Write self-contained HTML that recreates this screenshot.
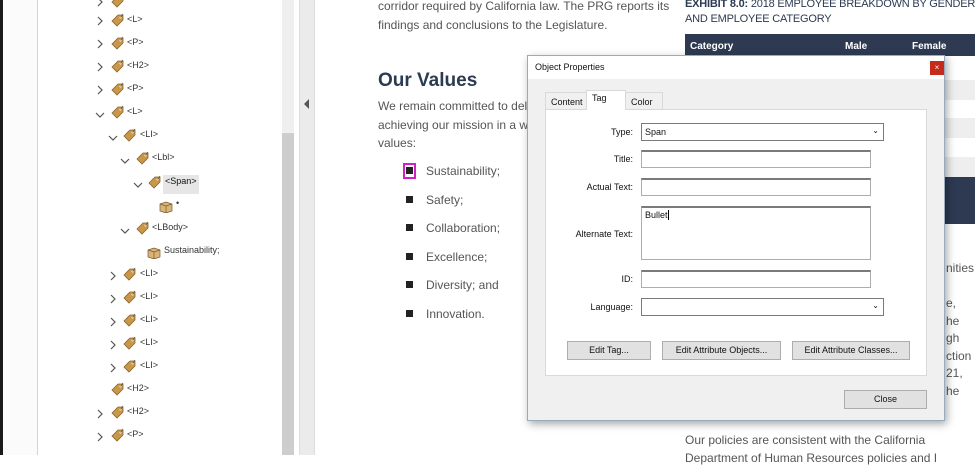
<!DOCTYPE html>
<html><head><meta charset="utf-8"><style>
*{margin:0;padding:0;box-sizing:border-box}
body{width:975px;height:455px;overflow:hidden;background:#fff;font-family:"Liberation Sans",sans-serif;position:relative}
.a{position:absolute}
.tree{font-size:9px;color:#333}
.row{position:absolute;height:14px;line-height:14px}
.pg{font-size:12px;color:#555;line-height:18.5px}
.dlg{font-size:9px;color:#111}
.lbl{position:absolute;text-align:right;width:120px;left:0}
.inp{position:absolute;background:#fff;border:1px solid #adadad;border-top:2px solid #7a7a7a}
.btn{position:absolute;background:#e1e1e1;border:1px solid #adadad;text-align:center;line-height:17px;font-size:9px}
.bul{position:absolute;width:7px;height:7px;background:#222}
</style></head><body>
<div class="a" style="left:0;top:0;width:3px;height:455px;background:#1a1a1a"></div>
<div class="a" style="left:3px;top:0;width:34px;height:455px;background:#fbfbfb"></div>
<div class="a" style="left:37px;top:0;width:1px;height:455px;background:#d4d4d4"></div>
<div class="a" style="left:282px;top:0;width:12px;height:455px;background:#efefef"></div>
<div class="a" style="left:282px;top:133px;width:12px;height:322px;background:#cdcdcd"></div>
<div class="a" style="left:299px;top:0;width:16px;height:455px;background:#ebebeb;border-left:1px solid #dcdcdc;border-right:1px solid #dcdcdc"></div>
<svg class="a" style="left:304px;top:99px" width="6" height="10"><path d="M5 0L0 5L5 10Z" fill="#555"/></svg>

<div class="tree">
<svg width="0" height="0" style="position:absolute"><defs>
<g id="tg"><path d="M2 8L8 2L13 2L13 7L7 13Z" fill="#c8974a" stroke="#8a6428" stroke-width=".8"/><circle cx="10.5" cy="4.5" r="1" fill="#fff"/><path d="M10.5 4.5L13 1" stroke="#555" stroke-width=".7"/></g>
<g id="cr"><path d="M3 3L7 7L3 11" fill="none" stroke="#555" stroke-width="1.2"/></g>
<g id="cd"><path d="M1 5L5 9L9 5" fill="none" stroke="#555" stroke-width="1.2"/></g>
<g id="bx"><path d="M1 5L7 3L13 5L13 12L7 14L1 12Z" fill="#d9b37a" stroke="#7a5a2a" stroke-width=".7"/><path d="M1 5L7 7L13 5M7 7V14" fill="none" stroke="#7a5a2a" stroke-width=".7"/></g>
</defs></svg>
<svg class="a" style="left:95px;top:-5px" width="12" height="14"><use href="#cr"/></svg><svg class="a" style="left:110px;top:-6px" width="14" height="14"><use href="#tg"/></svg>
<svg class="a" style="left:95px;top:14px" width="12" height="14"><use href="#cr"/></svg><svg class="a" style="left:110px;top:13px" width="14" height="14"><use href="#tg"/></svg><div class="row" style="left:127px;top:12px">&lt;L&gt;</div>
<svg class="a" style="left:95px;top:37px" width="12" height="14"><use href="#cr"/></svg><svg class="a" style="left:110px;top:36px" width="14" height="14"><use href="#tg"/></svg><div class="row" style="left:127px;top:35px">&lt;P&gt;</div>
<svg class="a" style="left:95px;top:60px" width="12" height="14"><use href="#cr"/></svg><svg class="a" style="left:110px;top:59px" width="14" height="14"><use href="#tg"/></svg><div class="row" style="left:127px;top:58px">&lt;H2&gt;</div>
<svg class="a" style="left:95px;top:83px" width="12" height="14"><use href="#cr"/></svg><svg class="a" style="left:110px;top:82px" width="14" height="14"><use href="#tg"/></svg><div class="row" style="left:127px;top:81px">&lt;P&gt;</div>
<svg class="a" style="left:95px;top:108px" width="12" height="14"><use href="#cd"/></svg><svg class="a" style="left:110px;top:105px" width="14" height="14"><use href="#tg"/></svg><div class="row" style="left:127px;top:104px">&lt;L&gt;</div>
<svg class="a" style="left:108px;top:131px" width="12" height="14"><use href="#cd"/></svg><svg class="a" style="left:122px;top:128px" width="14" height="14"><use href="#tg"/></svg><div class="row" style="left:140px;top:127px">&lt;LI&gt;</div>
<svg class="a" style="left:120px;top:154px" width="12" height="14"><use href="#cd"/></svg><svg class="a" style="left:135px;top:151px" width="14" height="14"><use href="#tg"/></svg><div class="row" style="left:152px;top:150px">&lt;Lbl&gt;</div>
<div class="a" style="left:163px;top:175px;width:36px;height:19px;background:#e6e6e6"></div>
<svg class="a" style="left:133px;top:178px" width="12" height="14"><use href="#cd"/></svg><svg class="a" style="left:147px;top:175px" width="14" height="14"><use href="#tg"/></svg><div class="row" style="left:165px;top:174px;color:#111">&lt;Span&gt;</div>
<svg class="a" style="left:159px;top:199px" width="14" height="14"><use href="#bx"/></svg><div class="row" style="left:176px;top:196px">•</div>
<svg class="a" style="left:120px;top:224px" width="12" height="14"><use href="#cd"/></svg><svg class="a" style="left:135px;top:221px" width="14" height="14"><use href="#tg"/></svg><div class="row" style="left:152px;top:220px">&lt;LBody&gt;</div>
<svg class="a" style="left:147px;top:245px" width="14" height="14"><use href="#bx"/></svg><div class="row" style="left:164px;top:243px">Sustainability;</div>
<svg class="a" style="left:108px;top:269px" width="12" height="14"><use href="#cr"/></svg><svg class="a" style="left:122px;top:267px" width="14" height="14"><use href="#tg"/></svg><div class="row" style="left:140px;top:266px">&lt;LI&gt;</div>
<svg class="a" style="left:108px;top:292px" width="12" height="14"><use href="#cr"/></svg><svg class="a" style="left:122px;top:290px" width="14" height="14"><use href="#tg"/></svg><div class="row" style="left:140px;top:289px">&lt;LI&gt;</div>
<svg class="a" style="left:108px;top:315px" width="12" height="14"><use href="#cr"/></svg><svg class="a" style="left:122px;top:313px" width="14" height="14"><use href="#tg"/></svg><div class="row" style="left:140px;top:312px">&lt;LI&gt;</div>
<svg class="a" style="left:108px;top:338px" width="12" height="14"><use href="#cr"/></svg><svg class="a" style="left:122px;top:336px" width="14" height="14"><use href="#tg"/></svg><div class="row" style="left:140px;top:335px">&lt;LI&gt;</div>
<svg class="a" style="left:108px;top:361px" width="12" height="14"><use href="#cr"/></svg><svg class="a" style="left:122px;top:359px" width="14" height="14"><use href="#tg"/></svg><div class="row" style="left:140px;top:358px">&lt;LI&gt;</div>
<svg class="a" style="left:110px;top:382px" width="14" height="14"><use href="#tg"/></svg><div class="row" style="left:127px;top:381px">&lt;H2&gt;</div>
<svg class="a" style="left:95px;top:407px" width="12" height="14"><use href="#cr"/></svg><svg class="a" style="left:110px;top:405px" width="14" height="14"><use href="#tg"/></svg><div class="row" style="left:127px;top:404px">&lt;H2&gt;</div>
<svg class="a" style="left:95px;top:430px" width="12" height="14"><use href="#cr"/></svg><svg class="a" style="left:110px;top:428px" width="14" height="14"><use href="#tg"/></svg><div class="row" style="left:127px;top:427px">&lt;P&gt;</div>
</div>

<!-- page -->
<div class="a pg" style="left:378px;top:-3px;white-space:nowrap">corridor required by California law. The PRG reports its<br>findings and conclusions to the Legislature.</div>
<div class="a" style="left:378px;top:70px;font-size:19px;font-weight:bold;color:#2c3a52">Our Values</div>
<div class="a pg" style="left:378px;top:97px;white-space:nowrap">We remain committed to deliver<br>achieving our mission in a way<br>values:</div>
<div class="a" style="left:403px;top:163px;width:13px;height:16px;border:2px solid #d020c8"></div>
<div class="bul" style="left:406px;top:167px"></div>
<div class="bul" style="left:406px;top:196px"></div>
<div class="bul" style="left:406px;top:224px"></div>
<div class="bul" style="left:406px;top:253px"></div>
<div class="bul" style="left:406px;top:281px"></div>
<div class="bul" style="left:406px;top:310px"></div>
<div class="a pg" style="left:426px;top:157px;line-height:28.5px">Sustainability;<br>Safety;<br>Collaboration;<br>Excellence;<br>Diversity; and<br>Innovation.</div>

<div class="a" style="left:685px;top:-3px;font-size:11px;color:#2c3a52;line-height:15px;white-space:nowrap;letter-spacing:-.2px"><b>EXHIBIT 8.0:</b> 2018 EMPLOYEE BREAKDOWN BY GENDER<br>AND EMPLOYEE CATEGORY</div>
<div class="a" style="left:685px;top:34px;width:290px;height:22px;background:#2d3a52;color:#fff;font-size:10px;font-weight:bold;line-height:26px"><span style="position:absolute;left:5px">Category</span><span style="position:absolute;left:160px">Male</span><span style="position:absolute;left:227px">Female</span></div>
<div class="a" style="left:940px;top:80px;width:35px;height:20px;background:#eee"></div>
<div class="a" style="left:940px;top:118px;width:35px;height:20px;background:#eee"></div>
<div class="a" style="left:940px;top:157px;width:35px;height:20px;background:#eee"></div>
<div class="a" style="left:940px;top:177px;width:35px;height:47px;background:#2d3a52"></div>
<div class="a pg" style="left:946px;top:260px;line-height:17.5px">nities<br><br>e,<br>he<br>gh<br>ction<br>21,<br>he</div>
<div class="a pg" style="left:685px;top:431px;white-space:nowrap">Our policies are consistent with the California</div>
<div class="a pg" style="left:685px;top:449px;white-space:nowrap">Department of Human Resources policies and I</div>

<!-- dialog -->
<div class="a dlg" style="left:527px;top:55px;width:418px;height:366px;background:#f0f0f0;border:1px solid #9ab;box-shadow:2px 3px 8px rgba(0,0,0,.35)">
 <div class="a" style="left:0;top:0;width:416px;height:23px;background:#fff"></div>
 <div class="a" style="left:7px;top:6px;font-size:9px">Object Properties</div>
 <div class="a" style="left:402px;top:5px;width:14px;height:14px;background:#c42b1c;color:#fff;font-size:8px;text-align:center;line-height:13px">×</div>
 <div class="a" style="left:17px;top:53px;width:382px;height:267px;background:#fff;border:1px solid #d9d9d9"></div>
 <div class="a" style="left:17px;top:36px;width:42px;height:17px;border:1px solid #d9d9d9;border-bottom:none;background:#f0f0f0;padding:4px 0 0 5px">Content</div>
 <div class="a" style="left:58px;top:34px;width:40px;height:20px;border:1px solid #d9d9d9;border-bottom:none;background:#fff;padding:2px 0 0 5px">Tag</div>
 <div class="a" style="left:97px;top:36px;width:38px;height:17px;border:1px solid #d9d9d9;border-bottom:none;background:#f0f0f0;padding:4px 0 0 5px">Color</div>
 <div class="lbl" style="top:71px;left:-15px">Type:</div>
 <div class="a" style="left:113px;top:67px;width:243px;height:18px;border:1px solid #7a7a7a;background:#fff;padding:3px 3px">Span<span style="position:absolute;right:4px;top:2px;font-size:8px">&#8964;</span></div>
 <div class="lbl" style="top:98px;left:-15px">Title:</div>
 <div class="inp" style="left:113px;top:94px;width:230px;height:18px"></div>
 <div class="lbl" style="top:126px;left:-15px">Actual Text:</div>
 <div class="inp" style="left:113px;top:122px;width:230px;height:18px"></div>
 <div class="lbl" style="top:173px;left:-15px">Alternate Text:</div>
 <div class="inp" style="left:113px;top:150px;width:230px;height:54px;padding:2px 3px">Bullet<span style="border-left:1px solid #000;margin-left:0"></span></div>
 <div class="lbl" style="top:218px;left:-15px">ID:</div>
 <div class="inp" style="left:113px;top:214px;width:230px;height:18px"></div>
 <div class="lbl" style="top:246px;left:-15px">Language:</div>
 <div class="a" style="left:113px;top:242px;width:243px;height:18px;border:1px solid #7a7a7a;background:#fff"><span style="position:absolute;right:4px;top:2px;font-size:8px">&#8964;</span></div>
 <div class="btn" style="left:39px;top:285px;width:84px;height:19px">Edit Tag...</div>
 <div class="btn" style="left:134px;top:285px;width:119px;height:19px">Edit Attribute Objects...</div>
 <div class="btn" style="left:264px;top:285px;width:118px;height:19px">Edit Attribute Classes...</div>
 <div class="btn" style="left:316px;top:334px;width:83px;height:19px">Close</div>
</div>
</body></html>
